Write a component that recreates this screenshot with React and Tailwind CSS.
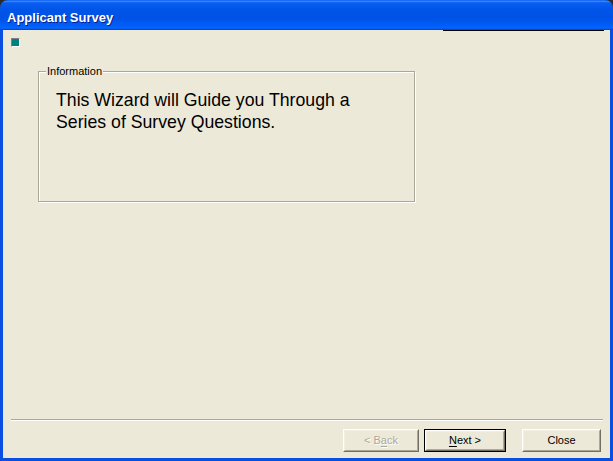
const ui = { fontFamily: '"Liberation Sans", Arial, sans-serif' }

function Btn({ children, disabled, isDefault, className = "" }) {
  const face = (
    <div className="flex-1 flex border border-t-white border-l-white border-b-[#716F64] border-r-[#716F64]">
      <div
        className={
          "flex-1 flex items-center justify-center border border-t-[#F1EFE2] border-l-[#F1EFE2] border-b-[#ACA899] border-r-[#ACA899] text-[11px] " +
          (disabled ? "text-[#ACA899] [text-shadow:1px_1px_0_#ffffff]" : "text-black")
        }
      >
        {children}
      </div>
    </div>
  )
  if (isDefault) {
    return <div className={"flex border border-black " + className}>{face}</div>
  }
  return <div className={"flex " + className}>{face}</div>
}

export default function App() {
  return (
    <div className="w-[613px] h-[461px] bg-[#2a2a2a] overflow-hidden" style={ui}>
      <div className="flex flex-col h-full rounded-t-[8px] overflow-hidden">
        {/* title bar */}
        <div className="h-[30px] shrink-0 flex items-start pl-[7px] pt-[9px] bg-[linear-gradient(to_bottom,#3d95ff_0%,#0a5ef0_6%,#0054e8_30%,#0052e6_60%,#0060fb_88%,#0866ff_93%,#0051e6_97%,#003dd6_100%)] border-t border-[#1a6bf5]">
          <span className="text-white font-bold text-[13px] leading-[15px] [text-shadow:1px_1px_0_#0a1d8c]">
            Applicant Survey
          </span>
        </div>

        {/* body */}
        <div className="flex-1 flex flex-col bg-[#ECE9D8] border-x-[3px] border-b-[3px] border-[#0a4fe2]">
          <div className="h-px w-[161px] ml-[440px] bg-black" />

          <div className="mt-[7px] ml-[8px] w-[9px] h-[9px] border border-t-[#808080] border-l-[#808080] border-b-white border-r-white bg-[#008080]" />

          {/* group box */}
          <div className="relative mt-[24px] ml-[35px] w-[377px] h-[131px] border border-[#ACA899] shadow-[inset_1px_1px_0_#ffffff,1px_1px_0_#ffffff]">
            <span className="absolute -top-[7px] left-[7px] px-px bg-[#ECE9D8] text-[11px] leading-[13px] text-black">
              Information
            </span>
            <div className="pt-[17px] pl-[17px] text-[17.7px] leading-[22px] text-black">
              This Wizard will Guide you Through a
              <br />
              Series of Survey Questions.
            </div>
          </div>

          <div className="flex-1" />

          {/* separator */}
          <div className="ml-[8px] mr-[7px] h-px bg-[#ACA899]" />
          <div className="ml-[8px] mr-[7px] h-px bg-white" />

          {/* buttons */}
          <div className="flex mt-[8px] mb-[6px] h-[23px] pl-[340px]">
            <Btn disabled className="w-[76px]">
              <span>
                &lt; B<span className="underline underline-offset-2">a</span>ck
              </span>
            </Btn>
            <Btn isDefault className="w-[82px] ml-[5px]">
              <span>
                <span className="underline underline-offset-2">N</span>ext &gt;
              </span>
            </Btn>
            <Btn className="w-[79px] ml-[16px]">Close</Btn>
          </div>
        </div>
      </div>
    </div>
  )
}
